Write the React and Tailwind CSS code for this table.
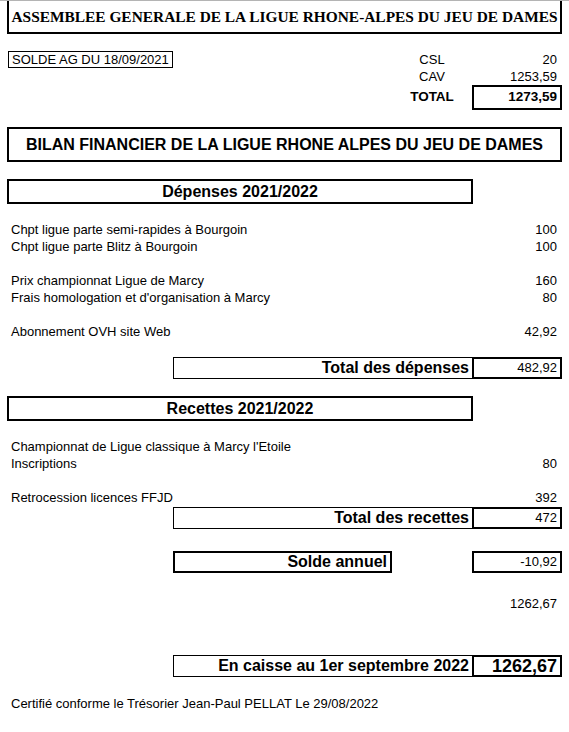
import React from 'react';

const sans = "font-['Liberation_Sans',Arial,sans-serif]";

function Row({ label, value }) {
  return (
    <div className="flex h-[17px] items-center justify-between pl-[4px] pr-[5px] text-[13px] leading-[17px]">
      <span>{label}</span>
      <span>{value}</span>
    </div>
  );
}

function Blank() {
  return <div className="h-[17px]" />;
}

function TotalRow({ label, value, boldValue = false }) {
  return (
    <div className="flex h-[22px] pl-[166px]">
      <div className="flex w-[299px] items-center justify-end border border-r-0 border-black pr-[3px] text-[16px] font-bold">
        {label}
      </div>
      <div
        className={
          boldValue
            ? 'flex w-[90px] items-center justify-end border-2 border-black pr-[3px] text-[18px] font-bold'
            : 'flex w-[90px] items-center justify-end border-2 border-black pr-[3px] text-[13px]'
        }
      >
        {value}
      </div>
    </div>
  );
}

function SectionBox({ children }) {
  return (
    <div className="flex h-[25px] w-[466px] items-center justify-center border-2 border-black text-[16px] font-bold">
      {children}
    </div>
  );
}

export default function App() {
  return (
    <div className={`min-h-[732px] w-[569px] bg-white text-black ${sans}`}>
      <div className="h-px bg-[#b4b4b4]" />

      <div className="mx-[7px]">
        {/* titre */}
        <div className="flex h-[33px] items-center justify-center border-x-2 border-b-2 border-black font-['Liberation_Serif','Times_New_Roman',serif] text-[15.4px] font-bold">
          ASSEMBLEE GENERALE DE LA LIGUE RHONE-ALPES DU JEU DE DAMES
        </div>

        {/* solde AG */}
        <div className="mt-[17px] flex">
          <div className="flex-1">
            <div className="ml-[1px] flex h-[17px] w-[165px] items-center border border-black pl-[3px] text-[13px]">
              SOLDE AG DU 18/09/2021
            </div>
          </div>
          <div className="flex flex-col text-[13px]">
            <div className="flex h-[17px] items-center">
              <div className="mr-[7px] w-[66px] text-center">CSL</div>
              <div className="w-[90px] pr-[5px] text-right">20</div>
            </div>
            <div className="flex h-[17px] items-center">
              <div className="mr-[7px] w-[66px] text-center">CAV</div>
              <div className="w-[90px] pr-[5px] text-right">1253,59</div>
            </div>
            <div className="flex h-[25px] items-stretch font-bold text-[13.5px]">
              <div className="mr-[7px] flex w-[66px] items-center justify-center">TOTAL</div>
              <div className="flex w-[90px] items-center justify-end border-2 border-black pr-[3px]">1273,59</div>
            </div>
          </div>
        </div>

        {/* bilan */}
        <div className="mt-[17px] flex h-[35px] items-center justify-center border-2 border-black text-[16px] font-bold">
          BILAN FINANCIER DE LA LIGUE RHONE ALPES DU JEU DE DAMES
        </div>

        <div className="mt-[17px]">
          <SectionBox>Dépenses 2021/2022</SectionBox>
        </div>

        <Blank />
        <Row label="Chpt ligue parte semi-rapides à Bourgoin" value="100" />
        <Row label="Chpt ligue parte Blitz à Bourgoin" value="100" />
        <Blank />
        <Row label="Prix championnat Ligue de Marcy" value="160" />
        <Row label="Frais homologation et d'organisation à Marcy" value="80" />
        <Blank />
        <Row label="Abonnement OVH site Web" value="42,92" />
        <Blank />
        <TotalRow label="Total des dépenses" value="482,92" />

        <div className="mt-[17px]">
          <SectionBox>Recettes 2021/2022</SectionBox>
        </div>

        <Blank />
        <Row label="Championnat de Ligue classique à Marcy l'Etoile" value="" />
        <Row label="Inscriptions" value="80" />
        <Blank />
        <Row label="Retrocession licences FFJD" value="392" />
        <div className="mt-px">
          <TotalRow label="Total des recettes" value="472" />
        </div>

        {/* solde annuel */}
        <div className="mt-[22px] flex h-[22px] pl-[166px]">
          <div className="flex w-[219px] items-center justify-end border-2 border-black pr-[3px] text-[16px] font-bold">
            Solde annuel
          </div>
          <div className="flex-1" />
          <div className="flex w-[90px] items-center justify-end border-2 border-black pr-[3px] text-[13px]">
            -10,92
          </div>
        </div>

        <div className="mt-[22px] flex h-[17px] items-center justify-end pr-[5px] text-[13px]">1262,67</div>

        <div className="mt-[43px]">
          <TotalRow label="En caisse au 1er septembre 2022" value="1262,67" boldValue />
        </div>

        <div className="mt-[18px] flex h-[17px] items-center pl-[4px] text-[13px]">
          Certifié conforme le Trésorier Jean-Paul PELLAT Le 29/08/2022
        </div>
      </div>
    </div>
  );
}
